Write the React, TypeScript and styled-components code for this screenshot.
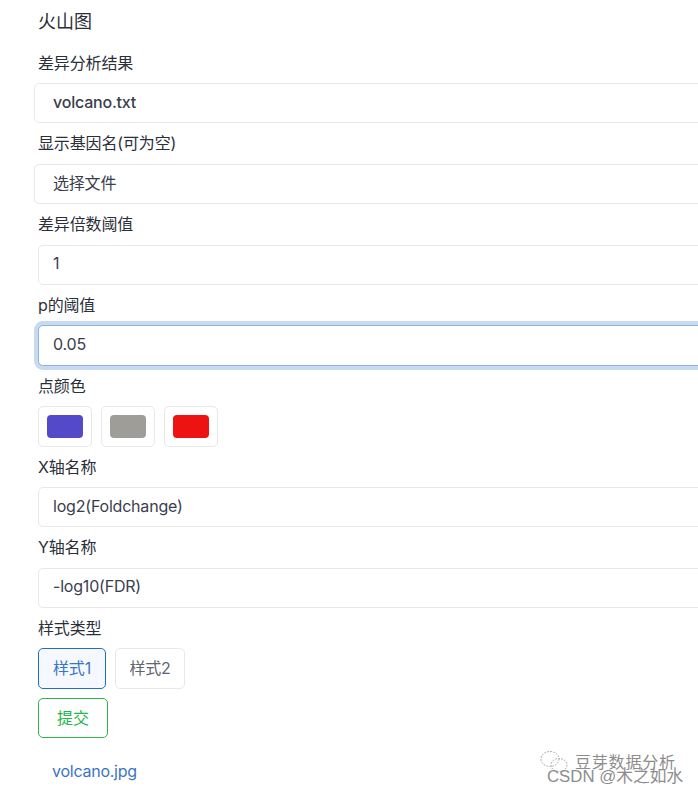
import * as React from "react";
import styled, { createGlobalStyle } from "styled-components";

const FONT = `Inter, "Noto Sans CJK SC", sans-serif`;

const GlobalStyle = createGlobalStyle`
  html, body {
    margin: 0;
    padding: 0;
    background: #fff;
    overflow: hidden;
  }
  body {
    width: 698px;
    height: 794px;
    font-family: ${FONT};
  }
`;

const Page = styled.div`
  position: relative;
  width: 698px;
  height: 794px;
  overflow: hidden;
`;

const Form = styled.form`
  display: flex;
  flex-direction: column;
  width: 800px;
  padding: 9px 0 0 38px;
`;

const Title = styled.h4`
  margin: 0 0 17.6px;
  font-size: 18px;
  font-weight: 400;
  line-height: 26px;
  color: #2c2f36;
`;

const Label = styled.label`
  display: block;
  margin: 0 0 10.4px;
  font-size: 16px;
  font-weight: 400;
  letter-spacing: -0.15px;
  line-height: 20px;
  color: #2b2f38;
`;

const Field = styled.div`
  margin-bottom: 10px;
`;

const Input = styled.input<{ $file?: boolean; $focus?: boolean; $medium?: boolean }>`
  display: block;
  box-sizing: border-box;
  width: 100%;
  height: 40.4px;
  margin-left: ${(p) => (p.$file ? "-4px" : "0")};
  padding: 0 ${(p) => (p.$file ? "18px" : "14px")} 3px;
  font-family: ${FONT};
  font-size: 16px;
  font-weight: ${(p) => (p.$medium ? 500 : 400)};
  letter-spacing: -0.2px;
  color: #3a3e4c;
  background: #fff;
  border: 1px solid ${(p) => (p.$focus ? "#8db4e6" : "#e8e8e8")};
  border-radius: 5px;
  outline: none;
  box-shadow: ${(p) => (p.$focus ? "0 0 0 4px #c8daf0" : "none")};
`;

const SwatchRow = styled.div`
  display: flex;
  gap: 9px;
`;

const SwatchButton = styled.div`
  display: flex;
  align-items: center;
  justify-content: center;
  box-sizing: border-box;
  width: 54px;
  height: 40.4px;
  border: 1px solid #e8e8e8;
  border-radius: 5px;
`;

const Swatch = styled.span<{ $color: string }>`
  display: block;
  width: 36px;
  height: 23px;
  border-radius: 4px;
  background: ${(p) => p.$color};
`;

const ButtonRow = styled.div`
  display: flex;
  gap: 9px;
  margin-bottom: 9px;
`;

const Choice = styled.button<{ $active?: boolean; $width: number }>`
  box-sizing: border-box;
  width: ${(p) => p.$width}px;
  height: 40.4px;
  padding: 0 0 3px;
  font-family: ${FONT};
  font-size: 16px;
  letter-spacing: -0.2px;
  color: ${(p) => (p.$active ? "#3a75c4" : "#60656e")};
  background: ${(p) => (p.$active ? "#f5f9ff" : "#fff")};
  border: 1px solid ${(p) => (p.$active ? "#1f6fc4" : "#e8e8e8")};
  border-radius: 5px;
`;

const Submit = styled.button`
  box-sizing: border-box;
  width: 70px;
  height: 40.4px;
  padding: 0 0 3px;
  font-family: ${FONT};
  font-size: 16px;
  color: #22b84a;
  background: #fff;
  border: 1px solid #2fb84a;
  border-radius: 5px;
`;

const FileLink = styled.a`
  display: block;
  margin: 12.4px 0 0 14px;
  font-size: 16px;
  letter-spacing: -0.25px;
  line-height: 22px;
  color: #3a75c4;
  text-decoration: none;
`;

const Watermark = styled.div`
  position: absolute;
  right: 15px;
  bottom: 6px;
  width: 144px;
  height: 38px;
  color: #8d8d8d;
  pointer-events: none;
`;

const WatermarkIcon = styled.svg`
  position: absolute;
  left: 0;
  top: 0;
`;

const WatermarkName = styled.span`
  position: absolute;
  left: 36px;
  top: 2px;
  font-size: 16px;
  line-height: 20px;
  white-space: nowrap;
  letter-spacing: 0.8px;
`;

const WatermarkCredit = styled.span`
  position: absolute;
  left: 8px;
  top: 17px;
  font-family: "Liberation Sans", "Noto Sans CJK SC", sans-serif;
  font-size: 16.8px;
  line-height: 20px;
  white-space: nowrap;
`;

const App = () => (
  <Page>
    <GlobalStyle />
    <Form>
      <Title>火山图</Title>
      <Field>
        <Label>差异分析结果</Label>
        <Input $file $medium readOnly value="volcano.txt" />
      </Field>
      <Field>
        <Label>显示基因名(可为空)</Label>
        <Input $file readOnly value="选择文件" />
      </Field>
      <Field>
        <Label>差异倍数阈值</Label>
        <Input readOnly value="1" />
      </Field>
      <Field>
        <Label>p的阈值</Label>
        <Input $focus readOnly value="0.05" />
      </Field>
      <Field>
        <Label>点颜色</Label>
        <SwatchRow>
          {["#5349c9", "#9f9d98", "#ee1313"].map((c) => (
            <SwatchButton key={c}>
              <Swatch $color={c} />
            </SwatchButton>
          ))}
        </SwatchRow>
      </Field>
      <Field>
        <Label>X轴名称</Label>
        <Input readOnly value="log2(Foldchange)" />
      </Field>
      <Field>
        <Label>Y轴名称</Label>
        <Input readOnly value="-log10(FDR)" />
      </Field>
      <Label>样式类型</Label>
      <ButtonRow>
        <Choice type="button" $active $width={68}>样式1</Choice>
        <Choice type="button" $width={70}>样式2</Choice>
      </ButtonRow>
      <ButtonRow>
        <Submit type="button">提交</Submit>
      </ButtonRow>
      <FileLink href="#">volcano.jpg</FileLink>
    </Form>
    <Watermark>
      <WatermarkIcon width="30" height="24" viewBox="0 0 30 24" fill="none" stroke="#9a9a9a" strokeWidth="1" strokeDasharray="1.5 1.5">
        <ellipse cx="11" cy="9" rx="9" ry="7.5" />
        <ellipse cx="20" cy="15" rx="8" ry="6.5" />
      </WatermarkIcon>
      <WatermarkName>豆芽数据分析</WatermarkName>
      <WatermarkCredit>CSDN @木之如水</WatermarkCredit>
    </Watermark>
  </Page>
);

export default App;
